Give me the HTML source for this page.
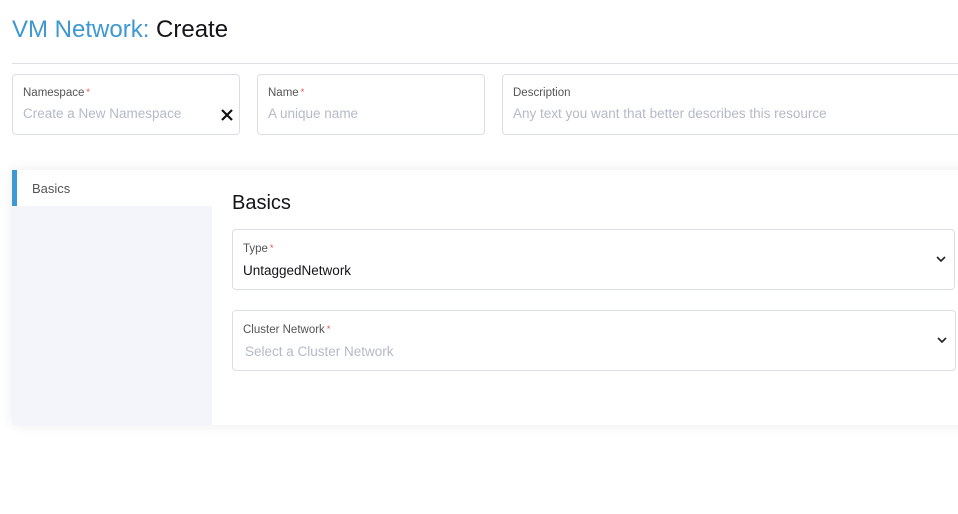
<!DOCTYPE html>
<html><head><style>
body{margin:0;width:958px;height:514px;background:#fff;font-family:"Liberation Sans",sans-serif;overflow:hidden;position:relative}
.abs{position:absolute}
h1{position:absolute;left:12px;top:16px;margin:0;font-weight:400;font-size:24px;color:#141419}
h1 span{color:#3d98d3}
.hr{left:12px;top:63px;width:946px;height:1px;background:#dcdee7}
.box{position:absolute;border:1px solid #dcdee7;border-radius:4px;box-sizing:border-box;background:#fff}
.lbl{position:absolute;left:10px;font-size:11.5px;color:#555}
.lbl i{color:#f64747;font-style:normal;font-size:9px;vertical-align:top;margin-left:2px}
.ph{position:absolute;left:10px;font-size:13.5px;color:#b6b9c8}
.val{position:absolute;left:10px;font-size:13.5px;color:#141419}
.card{left:12px;top:170px;width:960px;height:255px;background:#fff;box-shadow:0 0 12px rgba(0,0,0,0.08)}
.side{left:12px;top:206px;width:200px;height:219px;background:#f4f5fa}
.tab{left:12px;top:170px;width:200px;height:36px;background:#fff}
.bar{left:12px;top:170px;width:5px;height:36px;background:#3d98d3}
.chev{position:absolute;right:8px;top:25px}
</style></head><body>
<h1><span>VM Network:</span> Create</h1>
<div class="abs hr"></div>
<div class="box" style="left:12px;top:74px;width:228px;height:61px">
 <div class="lbl" style="top:12px">Namespace<i>*</i></div>
 <div class="ph" style="top:31px">Create a New Namespace</div>
 <svg class="abs" style="left:208px;top:34px" width="12" height="12" viewBox="0 0 12 12"><path d="M1 1L11 11M11 1L1 11" stroke="#111" stroke-width="2.2"/></svg>
</div>
<div class="box" style="left:257px;top:74px;width:228px;height:61px">
 <div class="lbl" style="top:12px">Name<i>*</i></div>
 <div class="ph" style="top:31px">A unique name</div>
</div>
<div class="box" style="left:502px;top:74px;width:470px;height:61px">
 <div class="lbl" style="top:12px">Description</div>
 <div class="ph" style="top:31px">Any text you want that better describes this resource</div>
</div>
<div class="abs card"></div>
<div class="abs side"></div>
<div class="abs tab"></div>
<div class="abs bar"></div>
<div class="abs" style="left:32px;top:181px;font-size:13px;color:#555">Basics</div>
<div class="abs" style="left:232px;top:192px;font-size:20px;color:#141419">Basics</div>
<div class="box" style="left:232px;top:229px;width:723px;height:61px">
 <div class="lbl" style="top:13px">Type<i>*</i></div>
 <div class="val" style="top:33px">UntaggedNetwork</div>
 <svg class="chev" width="10" height="8" viewBox="0 0 10 8"><path d="M1 2L5 6L9 2" fill="none" stroke="#222" stroke-width="1.6"/></svg>
</div>
<div class="box" style="left:232px;top:310px;width:724px;height:61px">
 <div class="lbl" style="top:13px">Cluster Network<i>*</i></div>
 <div class="ph" style="top:33px;left:12px">Select a Cluster Network</div>
 <svg class="chev" width="10" height="8" viewBox="0 0 10 8"><path d="M1 2L5 6L9 2" fill="none" stroke="#222" stroke-width="1.6"/></svg>
</div>
</body></html>
